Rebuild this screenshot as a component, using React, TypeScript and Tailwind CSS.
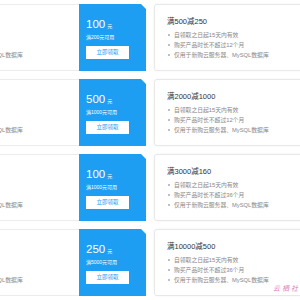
import React from "react";

const coupons = [
  { amt: "100", cond: "满200元可用", title: "满500减250", months: "12" },
  { amt: "500", cond: "满1000元可用", title: "满2000减1000", months: "12" },
  { amt: "100", cond: "满1000元可用", title: "满3000减160", months: "36" },
  { amt: "250", cond: "满5000元可用", title: "满10000减500", months: "36" },
];

const font = { fontFamily: '"Liberation Sans", "Noto Sans CJK SC", sans-serif' };

function Details({ title, months }: { title: string; months: string }) {
  const items = ["自领取之日起15天内有效", `购买产品时长不超过${months}个月`, "仅用于新购云服务器、MySQL数据库"];
  return (
    <div className="pl-[12px] pt-[12px]">
      <div className="text-[7.5px] leading-[10px] text-[#333] whitespace-nowrap">{title}</div>
      <ul className="mt-[3px]">
        {items.map((t) => (
          <li key={t} className="flex items-center h-[10px] text-[5.8px] text-[#888] whitespace-nowrap">
            <span className="w-[2px] h-[2px] rounded-full bg-[#aaa] ml-[1px] mr-[4px]" />
            {t}
          </li>
        ))}
      </ul>
    </div>
  );
}

export default function App() {
  return (
    <div className="relative w-[300px] h-[300px] overflow-hidden bg-white" style={font}>
      {coupons.map((c, i) => (
        <div key={i} className="flex h-[75px] py-[4px]">
          <div className="w-[79px] shrink-0 overflow-hidden border-y border-[#ececec] bg-white">
            <div className="ml-[-91px] w-[200px]">
              <Details title="满500减250" months="12" />
            </div>
          </div>
          <div className="w-[67px] shrink-0 bg-[#1d9ef3] pl-[7px] pt-[13px] text-white [clip-path:polygon(0_0,calc(100%_-_5px)_0,100%_5px,100%_100%,0_100%)]">
            <div className="flex items-baseline leading-[14px]">
              <span className="text-[11.5px]">{c.amt}</span>
              <span className="text-[5px] ml-[2px]">元</span>
            </div>
            <div className="text-[5px] leading-[7px] mt-[1px] whitespace-nowrap">{c.cond}</div>
            <div className="mt-[5px] w-[43px] h-[13px] bg-white flex items-center justify-center text-[5.5px] text-[#1d9ef3]">
              立即领取
            </div>
          </div>
          <div className="ml-[8px] w-[160px] shrink-0 bg-white border border-[#e8e8e8] rounded-[3px] shadow-[0_0_3px_rgba(0,0,0,0.05)]">
            <Details title={c.title} months={c.months} />
          </div>
        </div>
      ))}
      <div className="absolute left-[273px] top-[283px] text-[7px] italic text-[#e07bb8] tracking-[2px] whitespace-nowrap" style={{ fontFamily: '"Noto Sans CJK SC", serif' }}>
        云栖社区
      </div>
    </div>
  );
}
